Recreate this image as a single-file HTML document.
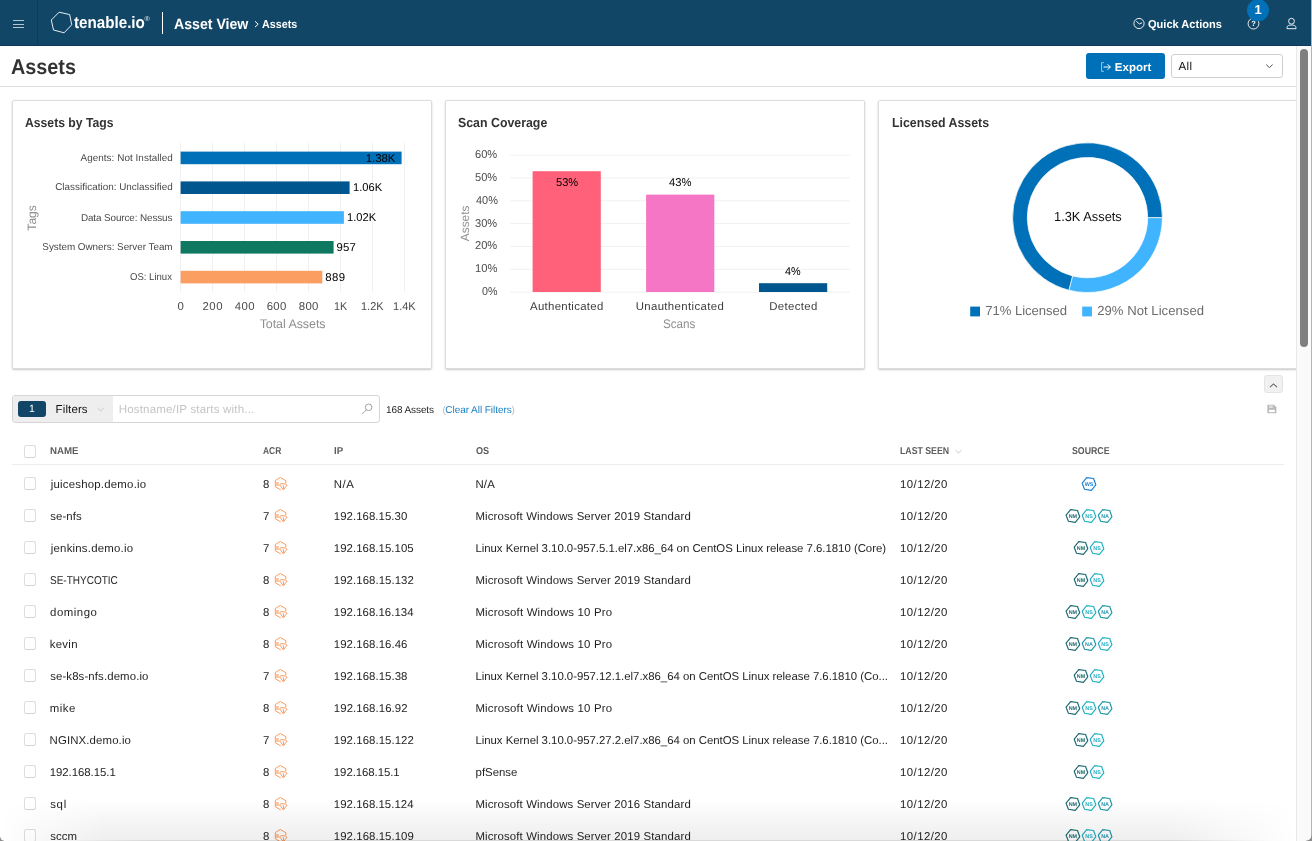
<!DOCTYPE html>
<html lang="en">
<head>
<meta charset="utf-8">
<title>Assets - Tenable.io</title>
<style>
html,body{margin:0;padding:0;}
body{width:1312px;height:841px;overflow:hidden;position:relative;background:#fff;font-family:"Liberation Sans",Arial,sans-serif;text-rendering:geometricPrecision;}
.t{position:absolute;white-space:pre;display:block;z-index:2;}
#pg{position:absolute;left:0;top:0;width:1312px;height:841px;overflow:hidden;will-change:transform;-webkit-font-smoothing:antialiased;}
.b{position:absolute;box-sizing:border-box;z-index:0;}
svg{position:absolute;left:0;top:0;overflow:visible;z-index:1;pointer-events:none;}
svg text{font-family:"Liberation Sans",Arial,sans-serif;text-rendering:geometricPrecision;}
</style>
</head>
<body>
<div id="pg">
<div class="b" style="left:0px;top:0px;width:1311px;height:46px;background:#124667;border-bottom:1px solid #0d3a5f;"></div>
<div class="b" style="left:37px;top:0px;width:1px;height:46px;background:#0d3a5f;"></div>
<div class="b" style="left:13px;top:20px;width:11px;height:1px;background:#b4c4d0;"></div>
<div class="b" style="left:13px;top:23.5px;width:11px;height:1px;background:#b4c4d0;"></div>
<div class="b" style="left:13px;top:27px;width:11px;height:1px;background:#b4c4d0;"></div>
<div class="b" style="left:162px;top:12px;width:1px;height:22px;background:#fff;"></div>
<svg width="1312" height="46" viewBox="0 0 1312 46">
<polygon points="59.1,12.2 69.7,14.6 71.7,24.8 64.1,32.8 53.5,30.0 51.3,20.0" fill="none" stroke="#fff" stroke-width="0.9" stroke-linejoin="round"/>
<path d="M255 21.3 L258.2 24.2 L255 27.1" fill="none" stroke="#fff" stroke-width="1" />
<circle cx="1139" cy="23.5" r="5.1" fill="none" stroke="#fff" stroke-width="0.9"/>
<path d="M1136.6 21.6 L1139.3 23.9 L1141.7 23.0" fill="none" stroke="#fff" stroke-width="0.9" stroke-linecap="round"/>
<circle cx="1253.5" cy="23.6" r="5.4" fill="none" stroke="#fff" stroke-width="0.9"/>
<circle cx="1258" cy="10.2" r="11" fill="#0071b9"/>
<circle cx="1291.5" cy="21.2" r="2.9" fill="none" stroke="#fff" stroke-width="0.9"/>
<path d="M1287 28.7 L1287 27.7 C1287 25.7 1289 25 1291.5 25 C1294 25 1296 25.7 1296 27.7 L1296 28.7 Z" fill="none" stroke="#fff" stroke-width="0.9" stroke-linejoin="round"/>
</svg>
<span class="t" style="left:74.45px;top:13px;font-size:16.6px;line-height:19px;height:19px;color:#fff;font-weight:700;transform:scaleX(0.9150);transform-origin:0 0;">tenable.io</span>
<span class="t" style="left:144.60px;top:16px;font-size:7px;line-height:7px;height:7px;color:#e8eef3;">®</span>
<span class="t" style="left:173.65px;top:16px;font-size:15px;line-height:17px;height:17px;color:#fff;font-weight:700;transform:scaleX(0.9415);transform-origin:0 0;">Asset View</span>
<span class="t" style="left:262.23px;top:19px;font-size:11.5px;line-height:12px;height:12px;color:#fff;font-weight:700;transform:scaleX(0.9331);transform-origin:0 0;">Assets</span>
<span class="t" style="left:1147.66px;top:19px;font-size:11.5px;line-height:12px;height:12px;color:#fff;font-weight:700;transform:scaleX(0.9611);transform-origin:0 0;">Quick Actions</span>
<span class="t" style="left:1254.38px;top:2px;font-size:13px;line-height:15px;height:15px;color:#fff;font-weight:700;">1</span>
<span class="t" style="left:1251.26px;top:19px;font-size:7.5px;line-height:9px;height:9px;color:#fff;font-weight:700;">?</span>
<span class="t" style="left:11.30px;top:55px;font-size:21.3px;line-height:24px;height:24px;color:#333;font-weight:700;transform:scaleX(0.9302);transform-origin:0 0;">Assets</span>
<div class="b" style="left:0px;top:86px;width:1296px;height:1px;background:#dedede;"></div>
<div class="b" style="left:1086px;top:53px;width:79px;height:26px;background:#0071b9;border-radius:3px;"></div>
<svg width="1312" height="100" viewBox="0 0 1312 100">
<path d="M1103.8 62.6 L1101.6 62.6 L1101.6 71.4 L1103.8 71.4" fill="none" stroke="#9cc6e4" stroke-width="1"/>
<path d="M1103.6 67 L1110.3 67 M1107.6 64.2 L1110.4 67 L1107.6 69.8" fill="none" stroke="#fff" stroke-width="1"/>
<path d="M1266.2 64.6 L1269.4 67.6 L1272.6 64.6" fill="none" stroke="#555" stroke-width="1"/>
</svg>
<span class="t" style="left:1114.85px;top:62px;font-size:11.5px;line-height:12px;height:12px;color:#fff;font-weight:700;letter-spacing:-0.01px;">Export</span>
<div class="b" style="left:1171px;top:54px;width:112px;height:24px;border:1px solid #cfcfcf;border-radius:3px;background:#fff;"></div>
<span class="t" style="left:1178.50px;top:61px;font-size:11.5px;line-height:12px;height:12px;color:#111;letter-spacing:0.39px;">All</span>
<div class="b" style="left:12px;top:100px;width:420px;height:269px;background:#fff;border:1px solid #dcdcdc;border-radius:2px;box-shadow:0 1px 2px rgba(0,0,0,0.22);"></div>
<div class="b" style="left:445px;top:100px;width:420px;height:269px;background:#fff;border:1px solid #dcdcdc;border-radius:2px;box-shadow:0 1px 2px rgba(0,0,0,0.22);"></div>
<div class="b" style="left:878px;top:100px;width:420px;height:269px;background:#fff;border:1px solid #dcdcdc;border-radius:2px;box-shadow:0 1px 2px rgba(0,0,0,0.22);"></div>
<span class="t" style="left:25.20px;top:115px;font-size:13.1px;line-height:15px;height:15px;color:#333;font-weight:700;transform:scaleX(0.9305);transform-origin:0 0;">Assets by Tags</span>
<span class="t" style="left:458.23px;top:115px;font-size:13.1px;line-height:15px;height:15px;color:#333;font-weight:700;transform:scaleX(0.9435);transform-origin:0 0;">Scan Coverage</span>
<span class="t" style="left:891.70px;top:115px;font-size:13.1px;line-height:15px;height:15px;color:#333;font-weight:700;transform:scaleX(0.9436);transform-origin:0 0;">Licensed Assets</span>
<span class="t" style="left:80.50px;top:153px;font-size:9.9px;line-height:11px;height:11px;color:#484848;letter-spacing:0.06px;">Agents: Not Installed</span>
<span class="t" style="left:365.84px;top:153px;font-size:11.4px;line-height:12px;height:12px;color:#000;letter-spacing:-0.07px;">1.38K</span>
<span class="t" style="left:55.21px;top:182px;font-size:9.9px;line-height:11px;height:11px;color:#484848;letter-spacing:0.02px;">Classification: Unclassified</span>
<span class="t" style="left:352.56px;top:182px;font-size:11.4px;line-height:12px;height:12px;color:#000;transform:scaleX(0.9797);transform-origin:0 0;">1.06K</span>
<span class="t" style="left:80.91px;top:213px;font-size:9.9px;line-height:11px;height:11px;color:#484848;letter-spacing:-0.10px;">Data Source: Nessus</span>
<span class="t" style="left:347.07px;top:212px;font-size:11.4px;line-height:12px;height:12px;color:#000;transform:scaleX(0.9762);transform-origin:0 0;">1.02K</span>
<span class="t" style="left:42.35px;top:242px;font-size:9.9px;line-height:11px;height:11px;color:#484848;letter-spacing:-0.03px;">System Owners: Server Team</span>
<span class="t" style="left:336.49px;top:242px;font-size:11.4px;line-height:12px;height:12px;color:#000;letter-spacing:0.15px;">957</span>
<span class="t" style="left:130.47px;top:272px;font-size:9.9px;line-height:11px;height:11px;color:#484848;transform:scaleX(0.9670);transform-origin:0 0;">OS: Linux</span>
<span class="t" style="left:325.19px;top:272px;font-size:11.4px;line-height:12px;height:12px;color:#000;letter-spacing:0.42px;">889</span>
<span class="t" style="left:177.41px;top:301px;font-size:11.4px;line-height:12px;height:12px;color:#4c4c4c;letter-spacing:0.73px;">0</span>
<span class="t" style="left:202.53px;top:301px;font-size:11.4px;line-height:12px;height:12px;color:#4c4c4c;letter-spacing:0.49px;">200</span>
<span class="t" style="left:234.87px;top:301px;font-size:11.4px;line-height:12px;height:12px;color:#4c4c4c;letter-spacing:0.32px;">400</span>
<span class="t" style="left:266.73px;top:301px;font-size:11.4px;line-height:12px;height:12px;color:#4c4c4c;letter-spacing:0.29px;">600</span>
<span class="t" style="left:298.79px;top:301px;font-size:11.4px;line-height:12px;height:12px;color:#4c4c4c;letter-spacing:0.27px;">800</span>
<span class="t" style="left:333.69px;top:301px;font-size:11.4px;line-height:12px;height:12px;color:#4c4c4c;transform:scaleX(0.9429);transform-origin:0 0;">1K</span>
<span class="t" style="left:360.98px;top:301px;font-size:11.4px;line-height:12px;height:12px;color:#4c4c4c;transform:scaleX(0.9618);transform-origin:0 0;">1.2K</span>
<span class="t" style="left:392.87px;top:301px;font-size:11.4px;line-height:12px;height:12px;color:#4c4c4c;transform:scaleX(0.9707);transform-origin:0 0;">1.4K</span>
<span class="t" style="left:259.65px;top:317px;font-size:12.5px;line-height:14px;height:14px;color:#8f8f8f;letter-spacing:-0.07px;">Total Assets</span>
<span class="t" style="left:482.07px;top:286px;font-size:11.4px;line-height:12px;height:12px;color:#4c4c4c;transform:scaleX(0.9412);transform-origin:0 0;">0%</span>
<span class="t" style="left:475.05px;top:263px;font-size:11.4px;line-height:12px;height:12px;color:#4c4c4c;transform:scaleX(0.9886);transform-origin:0 0;">10%</span>
<span class="t" style="left:475.34px;top:240px;font-size:11.4px;line-height:12px;height:12px;color:#4c4c4c;transform:scaleX(0.9757);transform-origin:0 0;">20%</span>
<span class="t" style="left:475.46px;top:218px;font-size:11.4px;line-height:12px;height:12px;color:#4c4c4c;transform:scaleX(0.9706);transform-origin:0 0;">30%</span>
<span class="t" style="left:475.68px;top:195px;font-size:11.4px;line-height:12px;height:12px;color:#4c4c4c;transform:scaleX(0.9606);transform-origin:0 0;">40%</span>
<span class="t" style="left:475.46px;top:172px;font-size:11.4px;line-height:12px;height:12px;color:#4c4c4c;transform:scaleX(0.9706);transform-origin:0 0;">50%</span>
<span class="t" style="left:475.34px;top:149px;font-size:11.4px;line-height:12px;height:12px;color:#4c4c4c;transform:scaleX(0.9757);transform-origin:0 0;">60%</span>
<span class="t" style="left:530.00px;top:301px;font-size:11.4px;line-height:12px;height:12px;color:#3c3c3c;letter-spacing:0.30px;">Authenticated</span>
<span class="t" style="left:555.56px;top:177px;font-size:11.4px;line-height:12px;height:12px;color:#000;transform:scaleX(0.9752);transform-origin:0 0;">53%</span>
<span class="t" style="left:635.64px;top:301px;font-size:11.4px;line-height:12px;height:12px;color:#3c3c3c;letter-spacing:0.37px;">Unauthenticated</span>
<span class="t" style="left:669.18px;top:177px;font-size:11.4px;line-height:12px;height:12px;color:#000;transform:scaleX(0.9832);transform-origin:0 0;">43%</span>
<span class="t" style="left:769.19px;top:301px;font-size:11.4px;line-height:12px;height:12px;color:#3c3c3c;letter-spacing:0.36px;">Detected</span>
<span class="t" style="left:784.98px;top:266px;font-size:11.4px;line-height:12px;height:12px;color:#000;transform:scaleX(0.9529);transform-origin:0 0;">4%</span>
<span class="t" style="left:663.38px;top:317px;font-size:12.5px;line-height:14px;height:14px;color:#8f8f8f;transform:scaleX(0.9333);transform-origin:0 0;">Scans</span>
<svg width="1312" height="380" viewBox="0 0 1312 380">
<rect x="180.0" y="143" width="1" height="149" fill="#f0f0f0"/>
<rect x="212.0" y="143" width="1" height="149" fill="#f0f0f0"/>
<rect x="244.0" y="143" width="1" height="149" fill="#f0f0f0"/>
<rect x="276.0" y="143" width="1" height="149" fill="#f0f0f0"/>
<rect x="308.0" y="143" width="1" height="149" fill="#f0f0f0"/>
<rect x="340.0" y="143" width="1" height="149" fill="#f0f0f0"/>
<rect x="372.0" y="143" width="1" height="149" fill="#f0f0f0"/>
<rect x="404.0" y="143" width="1" height="149" fill="#f0f0f0"/>
<rect x="180.6" y="151.6" width="221.0" height="12.6" fill="#0071b9"/>
<rect x="180.6" y="181.4" width="169.0" height="12.6" fill="#00578f"/>
<rect x="180.6" y="211.2" width="163.3" height="12.6" fill="#40b4ff"/>
<rect x="180.6" y="241.0" width="153.0" height="12.6" fill="#0f7860"/>
<rect x="180.6" y="270.8" width="141.7" height="12.6" fill="#fb9e62"/>
<text x="0" y="0" transform="translate(36.2,217.9) rotate(-90)" text-anchor="middle" font-size="12.1" fill="#8f8f8f">Tags</text>
<rect x="510" y="291.65" width="340" height="1" fill="#f1f1f1"/>
<rect x="510" y="268.81" width="340" height="1" fill="#f1f1f1"/>
<rect x="510" y="245.97" width="340" height="1" fill="#f1f1f1"/>
<rect x="510" y="223.13" width="340" height="1" fill="#f1f1f1"/>
<rect x="510" y="200.29" width="340" height="1" fill="#f1f1f1"/>
<rect x="510" y="177.45" width="340" height="1" fill="#f1f1f1"/>
<rect x="510" y="154.61" width="340" height="1" fill="#f1f1f1"/>
<rect x="532.6" y="171.2" width="68.2" height="120.8" fill="#ff617a"/>
<rect x="646.1" y="194.6" width="68.2" height="97.4" fill="#f576c4"/>
<rect x="759.0" y="283.2" width="68.2" height="8.8" fill="#00578f"/>
<text x="0" y="0" transform="translate(469.3,223.4) rotate(-90)" text-anchor="middle" font-size="11.9" fill="#8f8f8f">Assets</text>
<path d="M1162.40 217.60 A74.9 74.9 0 0 1 1068.87 290.15 L1072.53 275.91 A60.2 60.2 0 0 0 1147.70 217.60 Z" fill="#40b4ff" stroke="#fff" stroke-width="0.7" stroke-linejoin="round"/>
<path d="M1068.87 290.15 A74.9 74.9 0 1 1 1162.40 217.60 L1147.70 217.60 A60.2 60.2 0 1 0 1072.53 275.91 Z" fill="#0071b9" stroke="#fff" stroke-width="0.7" stroke-linejoin="round"/>
<rect x="970.2" y="306.6" width="9.8" height="9.8" fill="#0071b9"/>
<rect x="1082.2" y="306.6" width="9.8" height="9.8" fill="#40b4ff"/>
</svg>
<span class="t" style="left:1053.54px;top:209px;font-size:13.1px;line-height:15px;height:15px;color:#111;transform:scaleX(0.9804);transform-origin:0 0;">1.3K Assets</span>
<span class="t" style="left:985.35px;top:303px;font-size:13.1px;line-height:15px;height:15px;color:#6c6c6c;letter-spacing:-0.06px;">71% Licensed</span>
<span class="t" style="left:1097.25px;top:303px;font-size:13.1px;line-height:15px;height:15px;color:#6c6c6c;letter-spacing:0.03px;">29% Not Licensed</span>
<div class="b" style="left:1264px;top:375px;width:19px;height:18px;background:#f1f1f1;border:1px solid #e4e4e4;border-radius:3px;"></div>
<div class="b" style="left:12px;top:395px;width:368px;height:28px;border:1px solid #d6d6d6;border-radius:3px;background:#fff;"></div>
<div class="b" style="left:13px;top:396px;width:100px;height:26px;background:#eeeeee;border-radius:2px 0 0 2px;"></div>
<div class="b" style="left:18px;top:401px;width:28px;height:16px;background:#124667;border-radius:3px;"></div>
<span class="t" style="left:29.08px;top:403px;font-size:10.5px;line-height:12px;height:12px;color:#fff;">1</span>
<span class="t" style="left:55.58px;top:404px;font-size:11.5px;line-height:12px;height:12px;color:#111;letter-spacing:0.12px;">Filters</span>
<span class="t" style="left:118.68px;top:404px;font-size:11.5px;line-height:12px;height:12px;color:#c4c4c4;letter-spacing:0.19px;">Hostname/IP starts with...</span>
<span class="t" style="left:385.95px;top:405px;font-size:10px;line-height:11px;height:11px;color:#262626;letter-spacing:-0.09px;">168 Assets</span>
<span class="t" style="left:442.60px;top:405px;font-size:10px;line-height:11px;height:11px;color:#bbb;">(</span>
<span class="t" style="left:445.30px;top:405px;font-size:10px;line-height:11px;height:11px;color:#1b81c5;letter-spacing:-0.05px;">Clear All Filters</span>
<span class="t" style="left:511.60px;top:405px;font-size:10px;line-height:11px;height:11px;color:#bbb;">)</span>
<svg width="1312" height="430" viewBox="0 0 1312 430">
<path d="M97.6 408 L100.7 411 L103.8 408" fill="none" stroke="#c8c8c8" stroke-width="1"/>
<circle cx="368.6" cy="407.3" r="3.3" fill="none" stroke="#999" stroke-width="0.9"/>
<path d="M366.3 409.8 L362.4 413.8" fill="none" stroke="#999" stroke-width="0.9" stroke-linecap="round"/>
<path d="M1270 387.2 L1273.5 383.9 L1277 387.2" fill="none" stroke="#666" stroke-width="1.1"/>
<path d="M1267.4 404.8 L1274 404.8 L1276.4 407.2 L1276.4 413.2 L1267.4 413.2 Z" fill="#b9b9b9"/>
<rect x="1269.2" y="405.4" width="3.6" height="2.6" fill="#fff" opacity="0.55"/>
<rect x="1269" y="409.8" width="5.8" height="2.4" fill="#fff"/>
</svg>
<span class="t" style="left:50.07px;top:446px;font-size:10px;line-height:11px;height:11px;color:#5c5c5c;font-weight:700;transform:scaleX(0.9683);transform-origin:0 0;">NAME</span>
<span class="t" style="left:263.09px;top:446px;font-size:10px;line-height:11px;height:11px;color:#5c5c5c;font-weight:700;transform:scaleX(0.8443);transform-origin:0 0;">ACR</span>
<span class="t" style="left:333.97px;top:446px;font-size:10px;line-height:11px;height:11px;color:#5c5c5c;font-weight:700;transform:scaleX(0.9647);transform-origin:0 0;">IP</span>
<span class="t" style="left:475.74px;top:446px;font-size:10px;line-height:11px;height:11px;color:#5c5c5c;font-weight:700;transform:scaleX(0.9124);transform-origin:0 0;">OS</span>
<span class="t" style="left:900.03px;top:446px;font-size:10px;line-height:11px;height:11px;color:#5c5c5c;font-weight:700;transform:scaleX(0.8741);transform-origin:0 0;">LAST SEEN</span>
<span class="t" style="left:1071.54px;top:446px;font-size:10px;line-height:11px;height:11px;color:#5c5c5c;font-weight:700;transform:scaleX(0.8765);transform-origin:0 0;">SOURCE</span>
<div class="b" style="left:24px;top:445px;width:12px;height:13px;border:1px solid #dedede;border-bottom-color:#d4d4d4;border-radius:2.5px;background:#fff;"></div>
<div class="b" style="left:12px;top:464px;width:1272px;height:1px;background:#ececec;"></div>
<div class="b" style="left:24px;top:477px;width:12px;height:13px;border:1px solid #dedede;border-bottom-color:#d4d4d4;border-radius:2.5px;background:#fff;"></div>
<span class="t" style="left:50.78px;top:479px;font-size:11.4px;line-height:12px;height:12px;color:#1e1e1e;letter-spacing:0.22px;">juiceshop.demo.io</span>
<span class="t" style="left:263.01px;top:479px;font-size:11.4px;line-height:12px;height:12px;color:#1e1e1e;letter-spacing:0.44px;">8</span>
<span class="t" style="left:333.79px;top:479px;font-size:11.4px;line-height:12px;height:12px;color:#1e1e1e;letter-spacing:0.57px;">N/A</span>
<span class="t" style="left:475.39px;top:479px;font-size:11.4px;line-height:12px;height:12px;color:#1e1e1e;letter-spacing:0.22px;">N/A</span>
<span class="t" style="left:900.04px;top:479px;font-size:11.4px;line-height:12px;height:12px;color:#1e1e1e;letter-spacing:0.44px;">10/12/20</span>
<div class="b" style="left:24px;top:509px;width:12px;height:13px;border:1px solid #dedede;border-bottom-color:#d4d4d4;border-radius:2.5px;background:#fff;"></div>
<span class="t" style="left:50.16px;top:511px;font-size:11.4px;line-height:12px;height:12px;color:#1e1e1e;letter-spacing:0.10px;">se-nfs</span>
<span class="t" style="left:263.04px;top:511px;font-size:11.4px;line-height:12px;height:12px;color:#1e1e1e;letter-spacing:0.61px;">7</span>
<span class="t" style="left:333.84px;top:511px;font-size:11.4px;line-height:12px;height:12px;color:#1e1e1e;letter-spacing:0.05px;">192.168.15.30</span>
<span class="t" style="left:475.39px;top:511px;font-size:11.4px;line-height:12px;height:12px;color:#1e1e1e;letter-spacing:0.14px;">Microsoft Windows Server 2019 Standard</span>
<span class="t" style="left:900.04px;top:511px;font-size:11.4px;line-height:12px;height:12px;color:#1e1e1e;letter-spacing:0.44px;">10/12/20</span>
<div class="b" style="left:24px;top:541px;width:12px;height:13px;border:1px solid #dedede;border-bottom-color:#d4d4d4;border-radius:2.5px;background:#fff;"></div>
<span class="t" style="left:50.78px;top:543px;font-size:11.4px;line-height:12px;height:12px;color:#1e1e1e;letter-spacing:0.22px;">jenkins.demo.io</span>
<span class="t" style="left:263.04px;top:543px;font-size:11.4px;line-height:12px;height:12px;color:#1e1e1e;letter-spacing:0.61px;">7</span>
<span class="t" style="left:333.84px;top:543px;font-size:11.4px;line-height:12px;height:12px;color:#1e1e1e;letter-spacing:0.05px;">192.168.15.105</span>
<span class="t" style="left:475.39px;top:543px;font-size:11.4px;line-height:12px;height:12px;color:#1e1e1e;letter-spacing:-0.02px;">Linux Kernel 3.10.0-957.5.1.el7.x86_64 on CentOS Linux release 7.6.1810 (Core)</span>
<span class="t" style="left:900.04px;top:543px;font-size:11.4px;line-height:12px;height:12px;color:#1e1e1e;letter-spacing:0.44px;">10/12/20</span>
<div class="b" style="left:24px;top:573px;width:12px;height:13px;border:1px solid #dedede;border-bottom-color:#d4d4d4;border-radius:2.5px;background:#fff;"></div>
<span class="t" style="left:50.05px;top:575px;font-size:11.4px;line-height:12px;height:12px;color:#1e1e1e;transform:scaleX(0.8778);transform-origin:0 0;">SE-THYCOTIC</span>
<span class="t" style="left:263.01px;top:575px;font-size:11.4px;line-height:12px;height:12px;color:#1e1e1e;letter-spacing:0.44px;">8</span>
<span class="t" style="left:333.84px;top:575px;font-size:11.4px;line-height:12px;height:12px;color:#1e1e1e;letter-spacing:0.06px;">192.168.15.132</span>
<span class="t" style="left:475.39px;top:575px;font-size:11.4px;line-height:12px;height:12px;color:#1e1e1e;letter-spacing:0.14px;">Microsoft Windows Server 2019 Standard</span>
<span class="t" style="left:900.04px;top:575px;font-size:11.4px;line-height:12px;height:12px;color:#1e1e1e;letter-spacing:0.44px;">10/12/20</span>
<div class="b" style="left:24px;top:605px;width:12px;height:13px;border:1px solid #dedede;border-bottom-color:#d4d4d4;border-radius:2.5px;background:#fff;"></div>
<span class="t" style="left:50.04px;top:607px;font-size:11.4px;line-height:12px;height:12px;color:#1e1e1e;letter-spacing:0.53px;">domingo</span>
<span class="t" style="left:263.01px;top:607px;font-size:11.4px;line-height:12px;height:12px;color:#1e1e1e;letter-spacing:0.44px;">8</span>
<span class="t" style="left:333.84px;top:607px;font-size:11.4px;line-height:12px;height:12px;color:#1e1e1e;letter-spacing:0.04px;">192.168.16.134</span>
<span class="t" style="left:475.39px;top:607px;font-size:11.4px;line-height:12px;height:12px;color:#1e1e1e;letter-spacing:0.19px;">Microsoft Windows 10 Pro</span>
<span class="t" style="left:900.04px;top:607px;font-size:11.4px;line-height:12px;height:12px;color:#1e1e1e;letter-spacing:0.44px;">10/12/20</span>
<div class="b" style="left:24px;top:637px;width:12px;height:13px;border:1px solid #dedede;border-bottom-color:#d4d4d4;border-radius:2.5px;background:#fff;"></div>
<span class="t" style="left:49.76px;top:639px;font-size:11.4px;line-height:12px;height:12px;color:#1e1e1e;letter-spacing:0.29px;">kevin</span>
<span class="t" style="left:263.01px;top:639px;font-size:11.4px;line-height:12px;height:12px;color:#1e1e1e;letter-spacing:0.44px;">8</span>
<span class="t" style="left:333.84px;top:639px;font-size:11.4px;line-height:12px;height:12px;color:#1e1e1e;letter-spacing:0.06px;">192.168.16.46</span>
<span class="t" style="left:475.39px;top:639px;font-size:11.4px;line-height:12px;height:12px;color:#1e1e1e;letter-spacing:0.19px;">Microsoft Windows 10 Pro</span>
<span class="t" style="left:900.04px;top:639px;font-size:11.4px;line-height:12px;height:12px;color:#1e1e1e;letter-spacing:0.44px;">10/12/20</span>
<div class="b" style="left:24px;top:669px;width:12px;height:13px;border:1px solid #dedede;border-bottom-color:#d4d4d4;border-radius:2.5px;background:#fff;"></div>
<span class="t" style="left:50.16px;top:671px;font-size:11.4px;line-height:12px;height:12px;color:#1e1e1e;letter-spacing:0.12px;">se-k8s-nfs.demo.io</span>
<span class="t" style="left:263.04px;top:671px;font-size:11.4px;line-height:12px;height:12px;color:#1e1e1e;letter-spacing:0.61px;">7</span>
<span class="t" style="left:333.84px;top:671px;font-size:11.4px;line-height:12px;height:12px;color:#1e1e1e;letter-spacing:0.06px;">192.168.15.38</span>
<span class="t" style="left:475.39px;top:671px;font-size:11.4px;line-height:12px;height:12px;color:#1e1e1e;letter-spacing:-0.02px;">Linux Kernel 3.10.0-957.12.1.el7.x86_64 on CentOS Linux release 7.6.1810 (Co...</span>
<span class="t" style="left:900.04px;top:671px;font-size:11.4px;line-height:12px;height:12px;color:#1e1e1e;letter-spacing:0.44px;">10/12/20</span>
<div class="b" style="left:24px;top:701px;width:12px;height:13px;border:1px solid #dedede;border-bottom-color:#d4d4d4;border-radius:2.5px;background:#fff;"></div>
<span class="t" style="left:49.76px;top:703px;font-size:11.4px;line-height:12px;height:12px;color:#1e1e1e;letter-spacing:0.53px;">mike</span>
<span class="t" style="left:263.01px;top:703px;font-size:11.4px;line-height:12px;height:12px;color:#1e1e1e;letter-spacing:0.44px;">8</span>
<span class="t" style="left:333.84px;top:703px;font-size:11.4px;line-height:12px;height:12px;color:#1e1e1e;letter-spacing:0.07px;">192.168.16.92</span>
<span class="t" style="left:475.39px;top:703px;font-size:11.4px;line-height:12px;height:12px;color:#1e1e1e;letter-spacing:0.19px;">Microsoft Windows 10 Pro</span>
<span class="t" style="left:900.04px;top:703px;font-size:11.4px;line-height:12px;height:12px;color:#1e1e1e;letter-spacing:0.44px;">10/12/20</span>
<div class="b" style="left:24px;top:733px;width:12px;height:13px;border:1px solid #dedede;border-bottom-color:#d4d4d4;border-radius:2.5px;background:#fff;"></div>
<span class="t" style="left:49.59px;top:735px;font-size:11.4px;line-height:12px;height:12px;color:#1e1e1e;letter-spacing:0.13px;">NGINX.demo.io</span>
<span class="t" style="left:263.04px;top:735px;font-size:11.4px;line-height:12px;height:12px;color:#1e1e1e;letter-spacing:0.61px;">7</span>
<span class="t" style="left:333.84px;top:735px;font-size:11.4px;line-height:12px;height:12px;color:#1e1e1e;letter-spacing:0.06px;">192.168.15.122</span>
<span class="t" style="left:475.39px;top:735px;font-size:11.4px;line-height:12px;height:12px;color:#1e1e1e;letter-spacing:-0.02px;">Linux Kernel 3.10.0-957.27.2.el7.x86_64 on CentOS Linux release 7.6.1810 (Co...</span>
<span class="t" style="left:900.04px;top:735px;font-size:11.4px;line-height:12px;height:12px;color:#1e1e1e;letter-spacing:0.44px;">10/12/20</span>
<div class="b" style="left:24px;top:765px;width:12px;height:13px;border:1px solid #dedede;border-bottom-color:#d4d4d4;border-radius:2.5px;background:#fff;"></div>
<span class="t" style="left:49.65px;top:767px;font-size:11.4px;line-height:12px;height:12px;color:#1e1e1e;letter-spacing:-0.03px;">192.168.15.1</span>
<span class="t" style="left:263.01px;top:767px;font-size:11.4px;line-height:12px;height:12px;color:#1e1e1e;letter-spacing:0.44px;">8</span>
<span class="t" style="left:333.84px;top:767px;font-size:11.4px;line-height:12px;height:12px;color:#1e1e1e;letter-spacing:-0.06px;">192.168.15.1</span>
<span class="t" style="left:475.56px;top:767px;font-size:11.4px;line-height:12px;height:12px;color:#1e1e1e;">pfSense</span>
<span class="t" style="left:900.04px;top:767px;font-size:11.4px;line-height:12px;height:12px;color:#1e1e1e;letter-spacing:0.44px;">10/12/20</span>
<div class="b" style="left:24px;top:797px;width:12px;height:13px;border:1px solid #dedede;border-bottom-color:#d4d4d4;border-radius:2.5px;background:#fff;"></div>
<span class="t" style="left:50.16px;top:799px;font-size:11.4px;line-height:12px;height:12px;color:#1e1e1e;letter-spacing:0.72px;">sql</span>
<span class="t" style="left:263.01px;top:799px;font-size:11.4px;line-height:12px;height:12px;color:#1e1e1e;letter-spacing:0.44px;">8</span>
<span class="t" style="left:333.84px;top:799px;font-size:11.4px;line-height:12px;height:12px;color:#1e1e1e;letter-spacing:0.04px;">192.168.15.124</span>
<span class="t" style="left:475.39px;top:799px;font-size:11.4px;line-height:12px;height:12px;color:#1e1e1e;letter-spacing:0.14px;">Microsoft Windows Server 2016 Standard</span>
<span class="t" style="left:900.04px;top:799px;font-size:11.4px;line-height:12px;height:12px;color:#1e1e1e;letter-spacing:0.44px;">10/12/20</span>
<div class="b" style="left:24px;top:829px;width:12px;height:13px;border:1px solid #dedede;border-bottom-color:#d4d4d4;border-radius:2.5px;background:#fff;"></div>
<span class="t" style="left:50.16px;top:831px;font-size:11.4px;line-height:12px;height:12px;color:#1e1e1e;letter-spacing:0.05px;">sccm</span>
<span class="t" style="left:263.01px;top:831px;font-size:11.4px;line-height:12px;height:12px;color:#1e1e1e;letter-spacing:0.44px;">8</span>
<span class="t" style="left:333.84px;top:831px;font-size:11.4px;line-height:12px;height:12px;color:#1e1e1e;letter-spacing:0.06px;">192.168.15.109</span>
<span class="t" style="left:475.39px;top:831px;font-size:11.4px;line-height:12px;height:12px;color:#1e1e1e;letter-spacing:0.14px;">Microsoft Windows Server 2019 Standard</span>
<span class="t" style="left:900.04px;top:831px;font-size:11.4px;line-height:12px;height:12px;color:#1e1e1e;letter-spacing:0.44px;">10/12/20</span>
<svg width="1312" height="841" viewBox="0 0 1312 841">
<path d="M955.6 450.2 L958.5 453.0 L961.4 450.2" fill="none" stroke="#c4c4c4" stroke-width="1"/>
<g transform="translate(274.6,477.0)" fill="none" stroke="#fb9a5c" stroke-width="1" stroke-linecap="round" stroke-linejoin="round"><path d="M5.8 12.8 L0.7 9.7 L0.7 3.5 L5.8 0.5 L11.2 3.7 L11.2 5.6"/><path d="M6.4 6.8 L11.2 6.8 L12.3 8.2 L8.8 12.9 L5.3 8.2 Z M8.8 8.6 L8.8 11.4"/><rect x="1.6" y="5.0" width="2.5" height="4.0" fill="#fb9e62" fill-opacity="0.7" stroke="none"/></g>
<polygon transform="translate(1089.0,483.9)" points="-2.3,-6.3 4.6,-5.4 6.8,0.9 2.4,6.5 -4.5,5.3 -6.8,-0.7" fill="none" stroke="#1a7fd4" stroke-width="1.15" stroke-linejoin="round"/>
<text x="1089.0" y="486.0" text-anchor="middle" font-size="5.4" font-weight="700" fill="#1a7fd4">WS</text>
<g transform="translate(274.6,509.0)" fill="none" stroke="#fb9a5c" stroke-width="1" stroke-linecap="round" stroke-linejoin="round"><path d="M5.8 12.8 L0.7 9.7 L0.7 3.5 L5.8 0.5 L11.2 3.7 L11.2 5.6"/><path d="M6.4 6.8 L11.2 6.8 L12.3 8.2 L8.8 12.9 L5.3 8.2 Z M8.8 8.6 L8.8 11.4"/><rect x="1.6" y="5.0" width="2.5" height="4.0" fill="#fb9e62" fill-opacity="0.7" stroke="none"/></g>
<polygon transform="translate(1072.9,515.9)" points="-2.3,-6.3 4.6,-5.4 6.8,0.9 2.4,6.5 -4.5,5.3 -6.8,-0.7" fill="none" stroke="#1c6a70" stroke-width="1.15" stroke-linejoin="round"/>
<text x="1072.9" y="518.0" text-anchor="middle" font-size="5.4" font-weight="700" fill="#1c6a70">NM</text>
<polygon transform="translate(1089.0,515.9)" points="-2.3,-6.3 4.6,-5.4 6.8,0.9 2.4,6.5 -4.5,5.3 -6.8,-0.7" fill="none" stroke="#1fb0c4" stroke-width="1.15" stroke-linejoin="round"/>
<text x="1089.0" y="518.0" text-anchor="middle" font-size="5.4" font-weight="700" fill="#1fb0c4">NS</text>
<polygon transform="translate(1105.1,515.9)" points="-2.3,-6.3 4.6,-5.4 6.8,0.9 2.4,6.5 -4.5,5.3 -6.8,-0.7" fill="none" stroke="#1f95ad" stroke-width="1.15" stroke-linejoin="round"/>
<text x="1105.1" y="518.0" text-anchor="middle" font-size="5.4" font-weight="700" fill="#1f95ad">NA</text>
<g transform="translate(274.6,541.0)" fill="none" stroke="#fb9a5c" stroke-width="1" stroke-linecap="round" stroke-linejoin="round"><path d="M5.8 12.8 L0.7 9.7 L0.7 3.5 L5.8 0.5 L11.2 3.7 L11.2 5.6"/><path d="M6.4 6.8 L11.2 6.8 L12.3 8.2 L8.8 12.9 L5.3 8.2 Z M8.8 8.6 L8.8 11.4"/><rect x="1.6" y="5.0" width="2.5" height="4.0" fill="#fb9e62" fill-opacity="0.7" stroke="none"/></g>
<polygon transform="translate(1081.0,547.9)" points="-2.3,-6.3 4.6,-5.4 6.8,0.9 2.4,6.5 -4.5,5.3 -6.8,-0.7" fill="none" stroke="#1c6a70" stroke-width="1.15" stroke-linejoin="round"/>
<text x="1081.0" y="550.0" text-anchor="middle" font-size="5.4" font-weight="700" fill="#1c6a70">NM</text>
<polygon transform="translate(1097.0,547.9)" points="-2.3,-6.3 4.6,-5.4 6.8,0.9 2.4,6.5 -4.5,5.3 -6.8,-0.7" fill="none" stroke="#1fb0c4" stroke-width="1.15" stroke-linejoin="round"/>
<text x="1097.0" y="550.0" text-anchor="middle" font-size="5.4" font-weight="700" fill="#1fb0c4">NS</text>
<g transform="translate(274.6,573.0)" fill="none" stroke="#fb9a5c" stroke-width="1" stroke-linecap="round" stroke-linejoin="round"><path d="M5.8 12.8 L0.7 9.7 L0.7 3.5 L5.8 0.5 L11.2 3.7 L11.2 5.6"/><path d="M6.4 6.8 L11.2 6.8 L12.3 8.2 L8.8 12.9 L5.3 8.2 Z M8.8 8.6 L8.8 11.4"/><rect x="1.6" y="5.0" width="2.5" height="4.0" fill="#fb9e62" fill-opacity="0.7" stroke="none"/></g>
<polygon transform="translate(1081.0,579.9)" points="-2.3,-6.3 4.6,-5.4 6.8,0.9 2.4,6.5 -4.5,5.3 -6.8,-0.7" fill="none" stroke="#1c6a70" stroke-width="1.15" stroke-linejoin="round"/>
<text x="1081.0" y="582.0" text-anchor="middle" font-size="5.4" font-weight="700" fill="#1c6a70">NM</text>
<polygon transform="translate(1097.0,579.9)" points="-2.3,-6.3 4.6,-5.4 6.8,0.9 2.4,6.5 -4.5,5.3 -6.8,-0.7" fill="none" stroke="#1fb0c4" stroke-width="1.15" stroke-linejoin="round"/>
<text x="1097.0" y="582.0" text-anchor="middle" font-size="5.4" font-weight="700" fill="#1fb0c4">NS</text>
<g transform="translate(274.6,605.0)" fill="none" stroke="#fb9a5c" stroke-width="1" stroke-linecap="round" stroke-linejoin="round"><path d="M5.8 12.8 L0.7 9.7 L0.7 3.5 L5.8 0.5 L11.2 3.7 L11.2 5.6"/><path d="M6.4 6.8 L11.2 6.8 L12.3 8.2 L8.8 12.9 L5.3 8.2 Z M8.8 8.6 L8.8 11.4"/><rect x="1.6" y="5.0" width="2.5" height="4.0" fill="#fb9e62" fill-opacity="0.7" stroke="none"/></g>
<polygon transform="translate(1072.9,611.9)" points="-2.3,-6.3 4.6,-5.4 6.8,0.9 2.4,6.5 -4.5,5.3 -6.8,-0.7" fill="none" stroke="#1c6a70" stroke-width="1.15" stroke-linejoin="round"/>
<text x="1072.9" y="614.0" text-anchor="middle" font-size="5.4" font-weight="700" fill="#1c6a70">NM</text>
<polygon transform="translate(1089.0,611.9)" points="-2.3,-6.3 4.6,-5.4 6.8,0.9 2.4,6.5 -4.5,5.3 -6.8,-0.7" fill="none" stroke="#1fb0c4" stroke-width="1.15" stroke-linejoin="round"/>
<text x="1089.0" y="614.0" text-anchor="middle" font-size="5.4" font-weight="700" fill="#1fb0c4">NS</text>
<polygon transform="translate(1105.1,611.9)" points="-2.3,-6.3 4.6,-5.4 6.8,0.9 2.4,6.5 -4.5,5.3 -6.8,-0.7" fill="none" stroke="#1f95ad" stroke-width="1.15" stroke-linejoin="round"/>
<text x="1105.1" y="614.0" text-anchor="middle" font-size="5.4" font-weight="700" fill="#1f95ad">NA</text>
<g transform="translate(274.6,637.0)" fill="none" stroke="#fb9a5c" stroke-width="1" stroke-linecap="round" stroke-linejoin="round"><path d="M5.8 12.8 L0.7 9.7 L0.7 3.5 L5.8 0.5 L11.2 3.7 L11.2 5.6"/><path d="M6.4 6.8 L11.2 6.8 L12.3 8.2 L8.8 12.9 L5.3 8.2 Z M8.8 8.6 L8.8 11.4"/><rect x="1.6" y="5.0" width="2.5" height="4.0" fill="#fb9e62" fill-opacity="0.7" stroke="none"/></g>
<polygon transform="translate(1072.9,643.9)" points="-2.3,-6.3 4.6,-5.4 6.8,0.9 2.4,6.5 -4.5,5.3 -6.8,-0.7" fill="none" stroke="#1c6a70" stroke-width="1.15" stroke-linejoin="round"/>
<text x="1072.9" y="646.0" text-anchor="middle" font-size="5.4" font-weight="700" fill="#1c6a70">NM</text>
<polygon transform="translate(1089.0,643.9)" points="-2.3,-6.3 4.6,-5.4 6.8,0.9 2.4,6.5 -4.5,5.3 -6.8,-0.7" fill="none" stroke="#1f95ad" stroke-width="1.15" stroke-linejoin="round"/>
<text x="1089.0" y="646.0" text-anchor="middle" font-size="5.4" font-weight="700" fill="#1f95ad">NA</text>
<polygon transform="translate(1105.1,643.9)" points="-2.3,-6.3 4.6,-5.4 6.8,0.9 2.4,6.5 -4.5,5.3 -6.8,-0.7" fill="none" stroke="#1fb0c4" stroke-width="1.15" stroke-linejoin="round"/>
<text x="1105.1" y="646.0" text-anchor="middle" font-size="5.4" font-weight="700" fill="#1fb0c4">NS</text>
<g transform="translate(274.6,669.0)" fill="none" stroke="#fb9a5c" stroke-width="1" stroke-linecap="round" stroke-linejoin="round"><path d="M5.8 12.8 L0.7 9.7 L0.7 3.5 L5.8 0.5 L11.2 3.7 L11.2 5.6"/><path d="M6.4 6.8 L11.2 6.8 L12.3 8.2 L8.8 12.9 L5.3 8.2 Z M8.8 8.6 L8.8 11.4"/><rect x="1.6" y="5.0" width="2.5" height="4.0" fill="#fb9e62" fill-opacity="0.7" stroke="none"/></g>
<polygon transform="translate(1081.0,675.9)" points="-2.3,-6.3 4.6,-5.4 6.8,0.9 2.4,6.5 -4.5,5.3 -6.8,-0.7" fill="none" stroke="#1c6a70" stroke-width="1.15" stroke-linejoin="round"/>
<text x="1081.0" y="678.0" text-anchor="middle" font-size="5.4" font-weight="700" fill="#1c6a70">NM</text>
<polygon transform="translate(1097.0,675.9)" points="-2.3,-6.3 4.6,-5.4 6.8,0.9 2.4,6.5 -4.5,5.3 -6.8,-0.7" fill="none" stroke="#1fb0c4" stroke-width="1.15" stroke-linejoin="round"/>
<text x="1097.0" y="678.0" text-anchor="middle" font-size="5.4" font-weight="700" fill="#1fb0c4">NS</text>
<g transform="translate(274.6,701.0)" fill="none" stroke="#fb9a5c" stroke-width="1" stroke-linecap="round" stroke-linejoin="round"><path d="M5.8 12.8 L0.7 9.7 L0.7 3.5 L5.8 0.5 L11.2 3.7 L11.2 5.6"/><path d="M6.4 6.8 L11.2 6.8 L12.3 8.2 L8.8 12.9 L5.3 8.2 Z M8.8 8.6 L8.8 11.4"/><rect x="1.6" y="5.0" width="2.5" height="4.0" fill="#fb9e62" fill-opacity="0.7" stroke="none"/></g>
<polygon transform="translate(1072.9,707.9)" points="-2.3,-6.3 4.6,-5.4 6.8,0.9 2.4,6.5 -4.5,5.3 -6.8,-0.7" fill="none" stroke="#1c6a70" stroke-width="1.15" stroke-linejoin="round"/>
<text x="1072.9" y="710.0" text-anchor="middle" font-size="5.4" font-weight="700" fill="#1c6a70">NM</text>
<polygon transform="translate(1089.0,707.9)" points="-2.3,-6.3 4.6,-5.4 6.8,0.9 2.4,6.5 -4.5,5.3 -6.8,-0.7" fill="none" stroke="#1fb0c4" stroke-width="1.15" stroke-linejoin="round"/>
<text x="1089.0" y="710.0" text-anchor="middle" font-size="5.4" font-weight="700" fill="#1fb0c4">NS</text>
<polygon transform="translate(1105.1,707.9)" points="-2.3,-6.3 4.6,-5.4 6.8,0.9 2.4,6.5 -4.5,5.3 -6.8,-0.7" fill="none" stroke="#1f95ad" stroke-width="1.15" stroke-linejoin="round"/>
<text x="1105.1" y="710.0" text-anchor="middle" font-size="5.4" font-weight="700" fill="#1f95ad">NA</text>
<g transform="translate(274.6,733.0)" fill="none" stroke="#fb9a5c" stroke-width="1" stroke-linecap="round" stroke-linejoin="round"><path d="M5.8 12.8 L0.7 9.7 L0.7 3.5 L5.8 0.5 L11.2 3.7 L11.2 5.6"/><path d="M6.4 6.8 L11.2 6.8 L12.3 8.2 L8.8 12.9 L5.3 8.2 Z M8.8 8.6 L8.8 11.4"/><rect x="1.6" y="5.0" width="2.5" height="4.0" fill="#fb9e62" fill-opacity="0.7" stroke="none"/></g>
<polygon transform="translate(1081.0,739.9)" points="-2.3,-6.3 4.6,-5.4 6.8,0.9 2.4,6.5 -4.5,5.3 -6.8,-0.7" fill="none" stroke="#1c6a70" stroke-width="1.15" stroke-linejoin="round"/>
<text x="1081.0" y="742.0" text-anchor="middle" font-size="5.4" font-weight="700" fill="#1c6a70">NM</text>
<polygon transform="translate(1097.0,739.9)" points="-2.3,-6.3 4.6,-5.4 6.8,0.9 2.4,6.5 -4.5,5.3 -6.8,-0.7" fill="none" stroke="#1fb0c4" stroke-width="1.15" stroke-linejoin="round"/>
<text x="1097.0" y="742.0" text-anchor="middle" font-size="5.4" font-weight="700" fill="#1fb0c4">NS</text>
<g transform="translate(274.6,765.0)" fill="none" stroke="#fb9a5c" stroke-width="1" stroke-linecap="round" stroke-linejoin="round"><path d="M5.8 12.8 L0.7 9.7 L0.7 3.5 L5.8 0.5 L11.2 3.7 L11.2 5.6"/><path d="M6.4 6.8 L11.2 6.8 L12.3 8.2 L8.8 12.9 L5.3 8.2 Z M8.8 8.6 L8.8 11.4"/><rect x="1.6" y="5.0" width="2.5" height="4.0" fill="#fb9e62" fill-opacity="0.7" stroke="none"/></g>
<polygon transform="translate(1081.0,771.9)" points="-2.3,-6.3 4.6,-5.4 6.8,0.9 2.4,6.5 -4.5,5.3 -6.8,-0.7" fill="none" stroke="#1c6a70" stroke-width="1.15" stroke-linejoin="round"/>
<text x="1081.0" y="774.0" text-anchor="middle" font-size="5.4" font-weight="700" fill="#1c6a70">NM</text>
<polygon transform="translate(1097.0,771.9)" points="-2.3,-6.3 4.6,-5.4 6.8,0.9 2.4,6.5 -4.5,5.3 -6.8,-0.7" fill="none" stroke="#1fb0c4" stroke-width="1.15" stroke-linejoin="round"/>
<text x="1097.0" y="774.0" text-anchor="middle" font-size="5.4" font-weight="700" fill="#1fb0c4">NS</text>
<g transform="translate(274.6,797.0)" fill="none" stroke="#fb9a5c" stroke-width="1" stroke-linecap="round" stroke-linejoin="round"><path d="M5.8 12.8 L0.7 9.7 L0.7 3.5 L5.8 0.5 L11.2 3.7 L11.2 5.6"/><path d="M6.4 6.8 L11.2 6.8 L12.3 8.2 L8.8 12.9 L5.3 8.2 Z M8.8 8.6 L8.8 11.4"/><rect x="1.6" y="5.0" width="2.5" height="4.0" fill="#fb9e62" fill-opacity="0.7" stroke="none"/></g>
<polygon transform="translate(1072.9,803.9)" points="-2.3,-6.3 4.6,-5.4 6.8,0.9 2.4,6.5 -4.5,5.3 -6.8,-0.7" fill="none" stroke="#1c6a70" stroke-width="1.15" stroke-linejoin="round"/>
<text x="1072.9" y="806.0" text-anchor="middle" font-size="5.4" font-weight="700" fill="#1c6a70">NM</text>
<polygon transform="translate(1089.0,803.9)" points="-2.3,-6.3 4.6,-5.4 6.8,0.9 2.4,6.5 -4.5,5.3 -6.8,-0.7" fill="none" stroke="#1fb0c4" stroke-width="1.15" stroke-linejoin="round"/>
<text x="1089.0" y="806.0" text-anchor="middle" font-size="5.4" font-weight="700" fill="#1fb0c4">NS</text>
<polygon transform="translate(1105.1,803.9)" points="-2.3,-6.3 4.6,-5.4 6.8,0.9 2.4,6.5 -4.5,5.3 -6.8,-0.7" fill="none" stroke="#1f95ad" stroke-width="1.15" stroke-linejoin="round"/>
<text x="1105.1" y="806.0" text-anchor="middle" font-size="5.4" font-weight="700" fill="#1f95ad">NA</text>
<g transform="translate(274.6,829.0)" fill="none" stroke="#fb9a5c" stroke-width="1" stroke-linecap="round" stroke-linejoin="round"><path d="M5.8 12.8 L0.7 9.7 L0.7 3.5 L5.8 0.5 L11.2 3.7 L11.2 5.6"/><path d="M6.4 6.8 L11.2 6.8 L12.3 8.2 L8.8 12.9 L5.3 8.2 Z M8.8 8.6 L8.8 11.4"/><rect x="1.6" y="5.0" width="2.5" height="4.0" fill="#fb9e62" fill-opacity="0.7" stroke="none"/></g>
<polygon transform="translate(1072.9,835.9)" points="-2.3,-6.3 4.6,-5.4 6.8,0.9 2.4,6.5 -4.5,5.3 -6.8,-0.7" fill="none" stroke="#1c6a70" stroke-width="1.15" stroke-linejoin="round"/>
<text x="1072.9" y="838.0" text-anchor="middle" font-size="5.4" font-weight="700" fill="#1c6a70">NM</text>
<polygon transform="translate(1089.0,835.9)" points="-2.3,-6.3 4.6,-5.4 6.8,0.9 2.4,6.5 -4.5,5.3 -6.8,-0.7" fill="none" stroke="#1fb0c4" stroke-width="1.15" stroke-linejoin="round"/>
<text x="1089.0" y="838.0" text-anchor="middle" font-size="5.4" font-weight="700" fill="#1fb0c4">NS</text>
<polygon transform="translate(1105.1,835.9)" points="-2.3,-6.3 4.6,-5.4 6.8,0.9 2.4,6.5 -4.5,5.3 -6.8,-0.7" fill="none" stroke="#1f95ad" stroke-width="1.15" stroke-linejoin="round"/>
<text x="1105.1" y="838.0" text-anchor="middle" font-size="5.4" font-weight="700" fill="#1f95ad">NA</text>
</svg>
<div class="b" style="left:0px;top:799px;width:1297px;height:42px;background:linear-gradient(to bottom, rgba(0,0,0,0) 0%, rgba(0,0,0,0.03) 45%, rgba(0,0,0,0.066) 100%);-webkit-mask-image:linear-gradient(to right, rgba(0,0,0,0) 0px, rgba(0,0,0,0.35) 30px, #000 105px, #000 1170px, rgba(0,0,0,0.35) 1255px, rgba(0,0,0,0) 1297px);mask-image:linear-gradient(to right, rgba(0,0,0,0) 0px, rgba(0,0,0,0.35) 30px, #000 105px, #000 1170px, rgba(0,0,0,0.35) 1255px, rgba(0,0,0,0) 1297px);pointer-events:none;z-index:5;"></div>
<div class="b" style="left:1296px;top:46px;width:15px;height:795px;background:#fafafa;border-left:1px solid #e9e9e9;z-index:6;"></div>
<div class="b" style="left:1300px;top:49px;width:8px;height:298px;background:#7f7f7f;border-radius:4px;z-index:7;"></div>
<div class="b" style="left:1311px;top:0px;width:1px;height:841px;background:#b4b4b4;z-index:8;"></div>
<div class="b" style="left:60px;top:840px;width:1210px;height:1px;background:linear-gradient(to right, rgba(0,0,0,0) 0%, rgba(0,0,0,0.09) 8%, rgba(0,0,0,0.09) 92%, rgba(0,0,0,0) 100%);z-index:9;"></div>
<div class="b" style="left:0px;top:837px;width:4px;height:4px;background:radial-gradient(circle at 100% 0, rgba(0,0,0,0) 3.2px, #8c8c8c 4px);z-index:10;"></div>
<div class="b" style="left:1306px;top:835px;width:6px;height:6px;background:radial-gradient(circle at 0 0, rgba(0,0,0,0) 5.2px, #8c8c8c 6px);z-index:10;"></div>
</div>
</body>
</html>
